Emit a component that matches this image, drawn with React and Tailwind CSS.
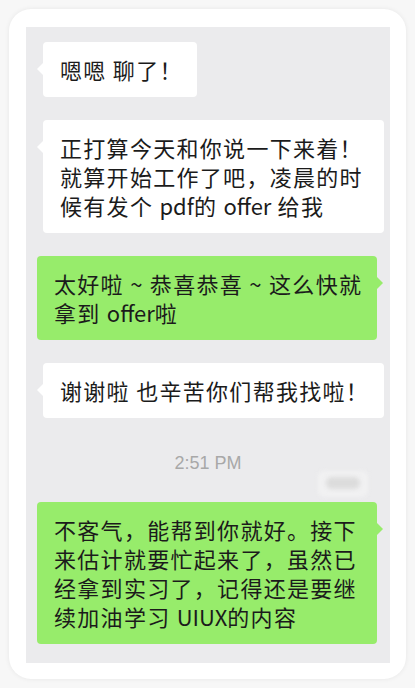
import React from 'react';

// Latin words inside the chat text sit without the extra CJK tracking
const L = ({ children }) => <span className="tracking-normal">{children}</span>;

const messages = [
  { side: 'left', fit: true, lines: ['嗯嗯 聊了！'] },
  {
    side: 'left',
    lines: [
      '正打算今天和你说一下来着！',
      '就算开始工作了吧，凌晨的时',
      <>候有发个 <L>pdf</L>的 <L>offer</L> 给我</>,
    ],
  },
  { side: 'right', lines: ['太好啦 ~ 恭喜恭喜 ~ 这么快就', <>拿到 <L>offer</L>啦</>] },
  { side: 'left', lines: ['谢谢啦 也辛苦你们帮我找啦！'] },
];

const lastMessage = {
  side: 'right',
  lines: [
    '不客气，能帮到你就好。接下',
    '来估计就要忙起来了，虽然已',
    '经拿到实习了，记得还是要继',
    <>续加油学习 <L>UIUX</L>的内容</>,
  ],
};

const Bubble = ({ msg }) => {
  const isMe = msg.side === 'right';
  return (
    <div
      className={`relative rounded-[4px] py-[13px] pl-[17px] text-[22px] leading-[29px] tracking-[1.3px] text-[#1b1b1b] ${
        isMe ? 'ml-[11px] mr-[13px] bg-[#97ec6b]' : 'ml-[17px] mr-[6px] bg-white'
      } ${msg.fit ? 'w-fit pr-[14px]' : ''}`}
    >
      {msg.lines.map((line, i) => (
        <div key={i} className="whitespace-nowrap">{line}</div>
      ))}
      {isMe ? (
        <span className="absolute right-[-6px] top-[21px] h-0 w-0 border-y-[6px] border-l-[6px] border-y-transparent border-l-[#97ec6b]" />
      ) : (
        <span className="absolute left-[-6px] top-[21px] h-0 w-0 border-y-[6px] border-r-[6px] border-y-transparent border-r-white" />
      )}
    </div>
  );
};

export default function App() {
  return (
    <div
      className="h-[688px] w-[415px] bg-[#f7f7f7] p-[9px]"
      style={{ fontFamily: '"Noto Sans CJK SC", "Noto Sans", sans-serif' }}
    >
      <div className="h-[670px] rounded-[22px] bg-white pb-[16px] pl-[17px] pr-[16px] pt-[18px] shadow-[0_0_5px_rgba(0,0,0,0.07)]">
        <div className="flex h-[636px] flex-col gap-[23px] bg-[#ebebed] pt-[15px]">
          {messages.map((m, i) => (
            <Bubble key={i} msg={m} />
          ))}

          {/* time divider, with the blurred smudge beside it */}
          <div className="relative mt-[12px] flex h-[20px] justify-center">
            <span className="font-['Liberation_Sans',sans-serif] text-[18px] leading-[20px] text-[#a8a8a8]">2:51 PM</span>
            <div className="absolute left-[292px] top-[18px] h-[26px] w-[50px] rounded-[6px] bg-[#f1f1f2] blur-[2px]" />
            <div className="absolute left-[300px] top-[24px] h-[12px] w-[34px] rounded-full bg-[#dcdcdc] blur-[2px]" />
          </div>

          <div className="mt-[6px]">
            <Bubble msg={lastMessage} />
          </div>
        </div>
      </div>
    </div>
  );
}
